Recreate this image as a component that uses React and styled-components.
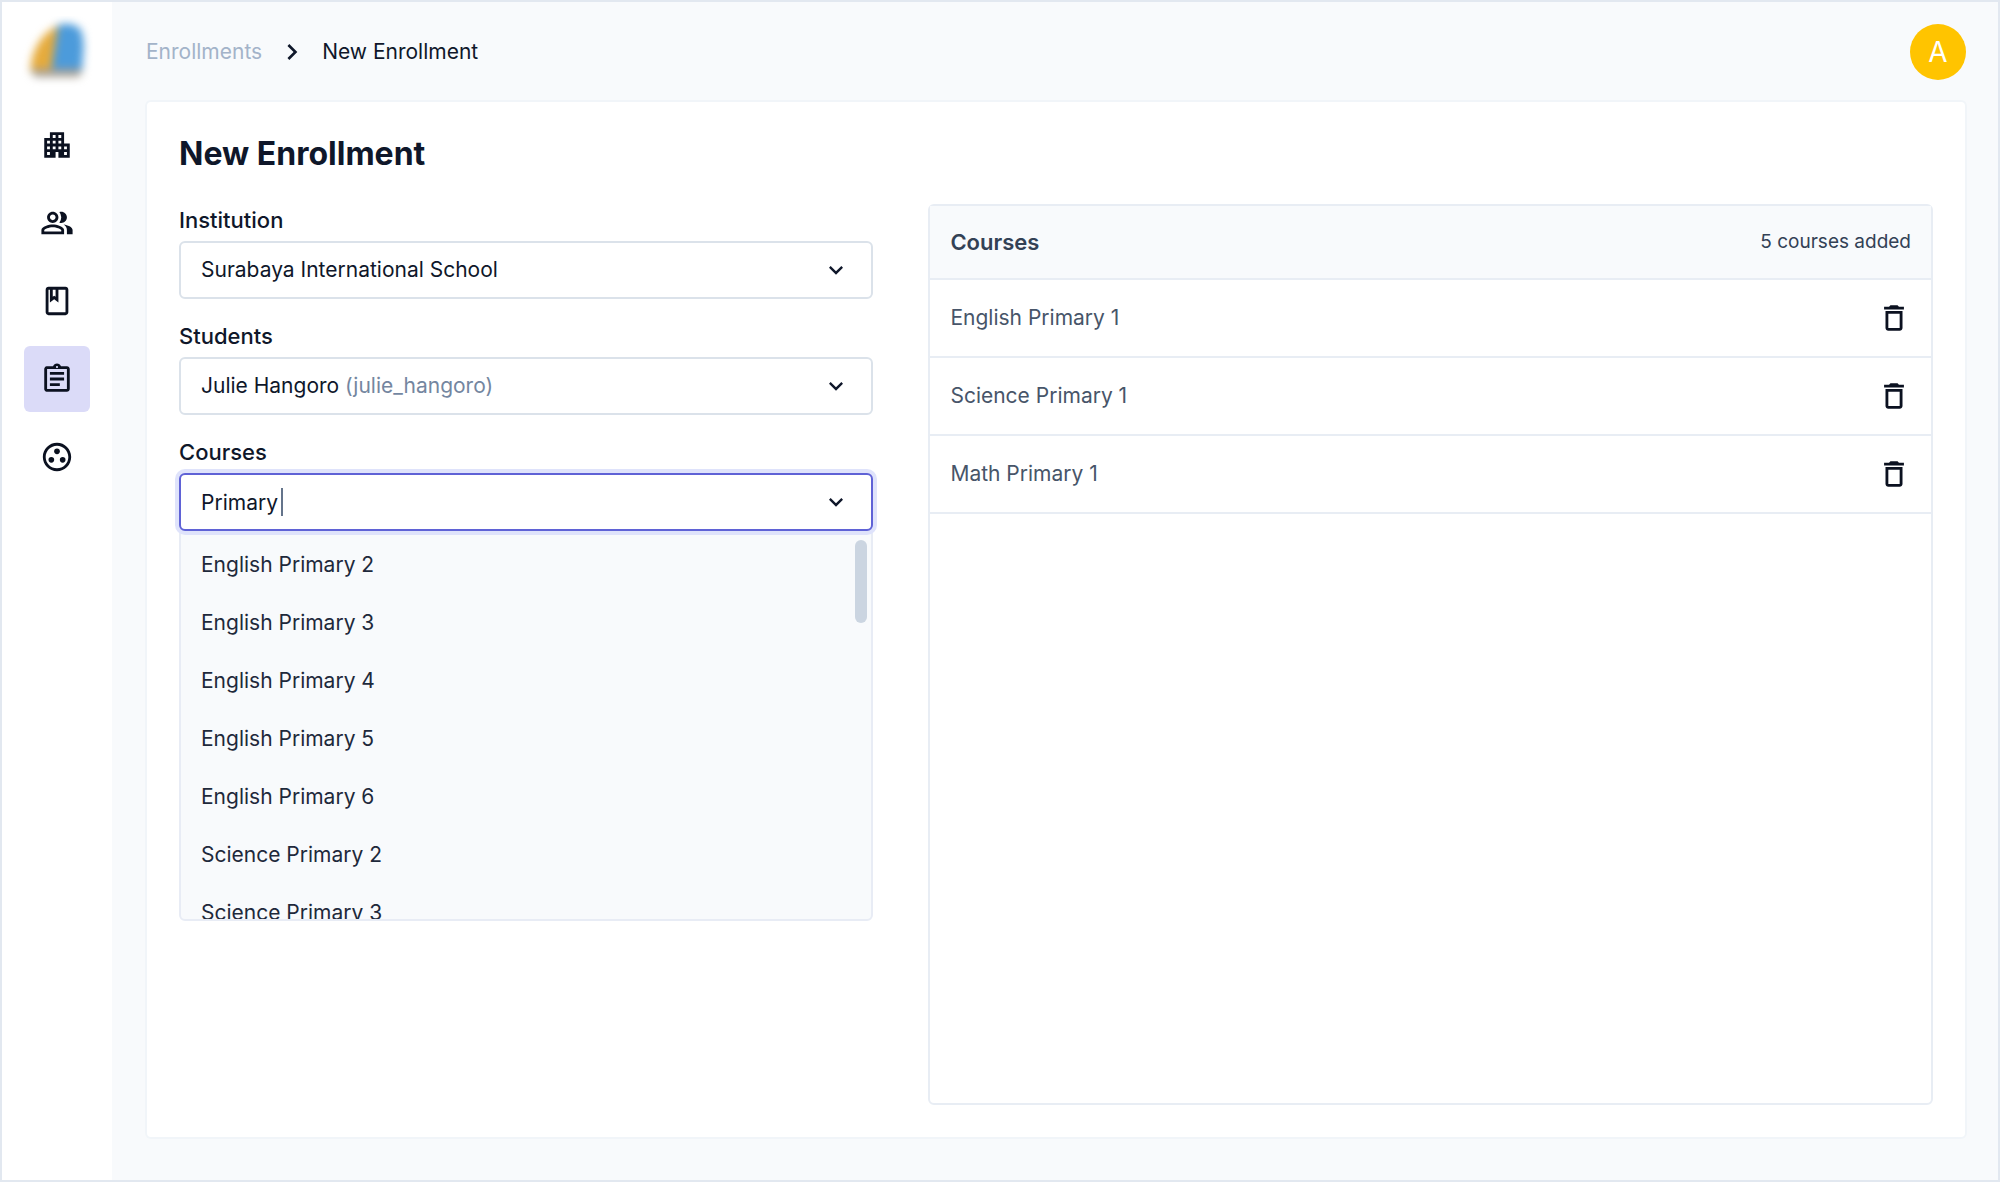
import React, { useState } from 'react';
import styled, { createGlobalStyle } from 'styled-components';
import {
  MdApartment,
  MdChevronRight,
  MdDeleteOutline,
  MdExpandMore,
  MdOutlineAssignment,
  MdOutlineBook,
  MdOutlineGroupWork,
  MdOutlinePeopleAlt,
} from 'react-icons/md';

const GlobalStyle = createGlobalStyle`
  * {
    box-sizing: border-box;
  }

  body {
    margin: 0;
    background: #f8fafc;
    color: #0f172a;
    font-family: Inter, 'Liberation Sans', sans-serif;
    font-size: 21px;
    line-height: 28px;
  }

  button, input, select {
    font: inherit;
    color: inherit;
  }
`;

const Page = styled.div`
  display: flex;
  min-height: 100vh;
  border: 2px solid #e2e8f0;
`;

const Sidebar = styled.nav`
  display: flex;
  flex-direction: column;
  align-items: center;
  width: 110px;
  flex-shrink: 0;
  padding-top: 14px;
  background: #fff;
`;

const Logo = styled.svg`
  width: 72px;
  height: 72px;
  margin-bottom: 24px;
`;

const NavList = styled.ul`
  display: flex;
  flex-direction: column;
  gap: 12px;
  margin: 0;
  padding: 0;
  list-style: none;
`;

const NavLink = styled.a`
  display: flex;
  align-items: center;
  justify-content: center;
  width: 66px;
  height: 66px;
  border-radius: 6px;
  background: ${(props) => (props.$active ? '#dbdbf8' : 'transparent')};
  color: #0b1120;
  font-size: 34px;
`;

const Main = styled.main`
  display: flex;
  flex-direction: column;
  flex: 1;
  min-width: 0;
  padding: 0 31px 41px 33px;
`;

const TopBar = styled.header`
  display: flex;
  align-items: center;
  justify-content: space-between;
  height: 98px;
  padding: 2px 1px 0;
`;

const Breadcrumbs = styled.nav`
  display: flex;
  align-items: center;
  gap: 14px;

  svg {
    font-size: 32px;
  }
`;

const CrumbLink = styled.a`
  color: #a3b3c9;
  text-decoration: none;
`;

const Avatar = styled.button`
  width: 56px;
  height: 56px;
  padding: 0;
  border: none;
  border-radius: 50%;
  background: #ffc400;
  color: #fff;
  font-size: 28px;
`;

const Card = styled.section`
  display: flex;
  flex-direction: column;
  flex: 1;
  padding: 32px;
  border: 2px solid #f1f5f9;
  border-radius: 6px;
  background: #fff;
`;

const Title = styled.h1`
  margin: 0 0 32px;
  font-size: 32px;
  font-weight: 700;
  line-height: 40px;
`;

const Columns = styled.div`
  display: grid;
  grid-template-columns: 694fr 1004fr;
  gap: 55px;
  flex: 1;
`;

const Form = styled.form`
  display: flex;
  flex-direction: column;
  gap: 23px;
`;

const Field = styled.div`
  position: relative;
`;

const Label = styled.label`
  display: block;
  margin-bottom: 7px;
  font-size: 22px;
  font-weight: 500;
`;

const Control = styled.div`
  position: relative;
  display: flex;
  align-items: center;
  height: 58px;
  padding-right: 21px;
  border: 2px solid ${(props) => (props.$focused ? '#5f62d6' : '#dbe2ea')};
  border-radius: 6px;
  background: #fff;
  box-shadow: ${(props) => (props.$focused ? '0 0 0 4px #dfe3fb' : 'none')};
  z-index: ${(props) => (props.$focused ? 2 : 0)};

  svg {
    flex-shrink: 0;
    margin-left: auto;
    font-size: 28px;
    pointer-events: none;
  }
`;

const Select = styled.select`
  flex: 1;
  height: 100%;
  padding: 0 20px;
  border: none;
  outline: none;
  background: transparent;
  appearance: none;
`;

const SelectButton = styled.button`
  flex: 1;
  height: 100%;
  padding: 0 20px;
  border: none;
  background: transparent;
  text-align: left;
`;

const Username = styled.span`
  color: #7486a0;
`;

const SearchInput = styled.input`
  field-sizing: content;
  height: 100%;
  padding: 0 0 0 20px;
  border: none;
  outline: none;
  background: transparent;
  caret-color: transparent;
`;

const Caret = styled.span`
  width: 2px;
  height: 28px;
  margin-left: 3px;
  background: #64748b;
`;

const Menu = styled.div`
  position: absolute;
  top: calc(100% - 4px);
  left: 0;
  right: 0;
  max-height: 394px;
  overflow: hidden;
  border: 2px solid #e8ecf5;
  border-radius: 6px;
  background: #f8fafc;
`;

const Options = styled.ul`
  margin: 0;
  padding: 7px 0 0;
  list-style: none;
`;

const Option = styled.li`
  padding: 15px 20px;
  color: #1e293b;
`;

const ScrollThumb = styled.span`
  position: absolute;
  top: 11px;
  right: 4px;
  width: 12px;
  height: 83px;
  border-radius: 6px;
  background: #cbd5e1;
`;

const Panel = styled.div`
  margin-top: -2px;
  border: 2px solid #e8edf4;
  border-radius: 6px;
`;

const Table = styled.table`
  width: 100%;
  border-collapse: collapse;
  color: #475569;

  th,
  td {
    padding: 0 20px;
    border-bottom: 2px solid #e8edf4;
    text-align: left;
  }

  thead tr {
    height: 73px;
    background: #f8fafc;
    color: #334155;
  }

  tbody tr {
    height: 78px;
  }

  th:last-child,
  td:last-child {
    text-align: right;
  }
`;

const HeadCell = styled.th`
  font-size: 22px;
  font-weight: 600;
`;

const CountCell = styled.th`
  color: #334155;
  font-size: 19px;
  font-weight: 400;
`;

const DeleteButton = styled.button`
  display: inline-flex;
  padding: 0;
  border: none;
  background: transparent;
  color: #0b1120;
  font-size: 34px;
  vertical-align: middle;
`;

const navItems = [
  { name: 'Institutions', icon: MdApartment },
  { name: 'Students', icon: MdOutlinePeopleAlt },
  { name: 'Courses', icon: MdOutlineBook },
  { name: 'Enrollments', icon: MdOutlineAssignment, active: true },
  { name: 'Groups', icon: MdOutlineGroupWork },
];

const courseOptions = [
  'English Primary 2',
  'English Primary 3',
  'English Primary 4',
  'English Primary 5',
  'English Primary 6',
  'Science Primary 2',
  'Science Primary 3',
];

const App = () => {
  const [query, setQuery] = useState('Primary');
  const [courses, setCourses] = useState(['English Primary 1', 'Science Primary 1', 'Math Primary 1']);

  const removeCourse = (name) => {
    setCourses(courses.filter((course) => course !== name));
  };

  return (
    <>
      <GlobalStyle />
      <Page>
        <Sidebar aria-label="Main">
          <Logo viewBox="0 0 72 72" aria-hidden="true">
            <defs>
              <filter id="soft" x="-30%" y="-30%" width="160%" height="160%" colorInterpolationFilters="sRGB">
                <feGaussianBlur stdDeviation="4" />
              </filter>
            </defs>
            <g filter="url(#soft)">
              <path d="M9 56 L11 42 Q18 18 38 9 L31 56 Z" fill="#e6ab3c" />
              <path d="M30 56 L37 9 Q52 5 60 14 Q64 26 62 40 L61 56 Z" fill="#4c9bdb" />
              <path d="M9 53 H62 L58 61 H14 Z" fill="#a8a196" />
            </g>
          </Logo>
          <NavList>
            {navItems.map(({ name, icon: Icon, active }) => (
              <li key={name}>
                <NavLink href="#" $active={active} aria-label={name}>
                  <Icon />
                </NavLink>
              </li>
            ))}
          </NavList>
        </Sidebar>

        <Main>
          <TopBar>
            <Breadcrumbs aria-label="Breadcrumb">
              <CrumbLink href="#">Enrollments</CrumbLink>
              <MdChevronRight />
              <span>New Enrollment</span>
            </Breadcrumbs>
            <Avatar type="button">A</Avatar>
          </TopBar>

          <Card>
            <Title>New Enrollment</Title>
            <Columns>
              <Form>
                <Field>
                  <Label htmlFor="institution">Institution</Label>
                  <Control>
                    <Select id="institution">
                      <option>Surabaya International School</option>
                    </Select>
                    <MdExpandMore />
                  </Control>
                </Field>

                <Field>
                  <Label htmlFor="students">Students</Label>
                  <Control>
                    <SelectButton id="students" type="button" aria-haspopup="listbox">
                      Julie Hangoro <Username>(julie_hangoro)</Username>
                    </SelectButton>
                    <MdExpandMore />
                  </Control>
                </Field>

                <Field>
                  <Label htmlFor="courses">Courses</Label>
                  <Control $focused>
                    <SearchInput
                      id="courses"
                      type="text"
                      role="combobox"
                      aria-expanded="true"
                      aria-controls="course-options"
                      value={query}
                      onChange={(e) => setQuery(e.target.value)}
                    />
                    <Caret />
                    <MdExpandMore />
                  </Control>
                  {/* Course suggestions */}
                  <Menu>
                    <Options id="course-options" role="listbox">
                      {courseOptions.map((name) => (
                        <Option key={name} role="option">{name}</Option>
                      ))}
                    </Options>
                    <ScrollThumb />
                  </Menu>
                </Field>
              </Form>

              {/* Selected courses */}
              <Panel>
                <Table>
                  <thead>
                    <tr>
                      <HeadCell>Courses</HeadCell>
                      <CountCell>5 courses added</CountCell>
                    </tr>
                  </thead>
                  <tbody>
                    {courses.map((course) => (
                      <tr key={course}>
                        <td>{course}</td>
                        <td>
                          <DeleteButton type="button" aria-label={`Remove ${course}`} onClick={() => removeCourse(course)}>
                            <MdDeleteOutline />
                          </DeleteButton>
                        </td>
                      </tr>
                    ))}
                  </tbody>
                </Table>
              </Panel>
            </Columns>
          </Card>
        </Main>
      </Page>
    </>
  );
};

export default App;
